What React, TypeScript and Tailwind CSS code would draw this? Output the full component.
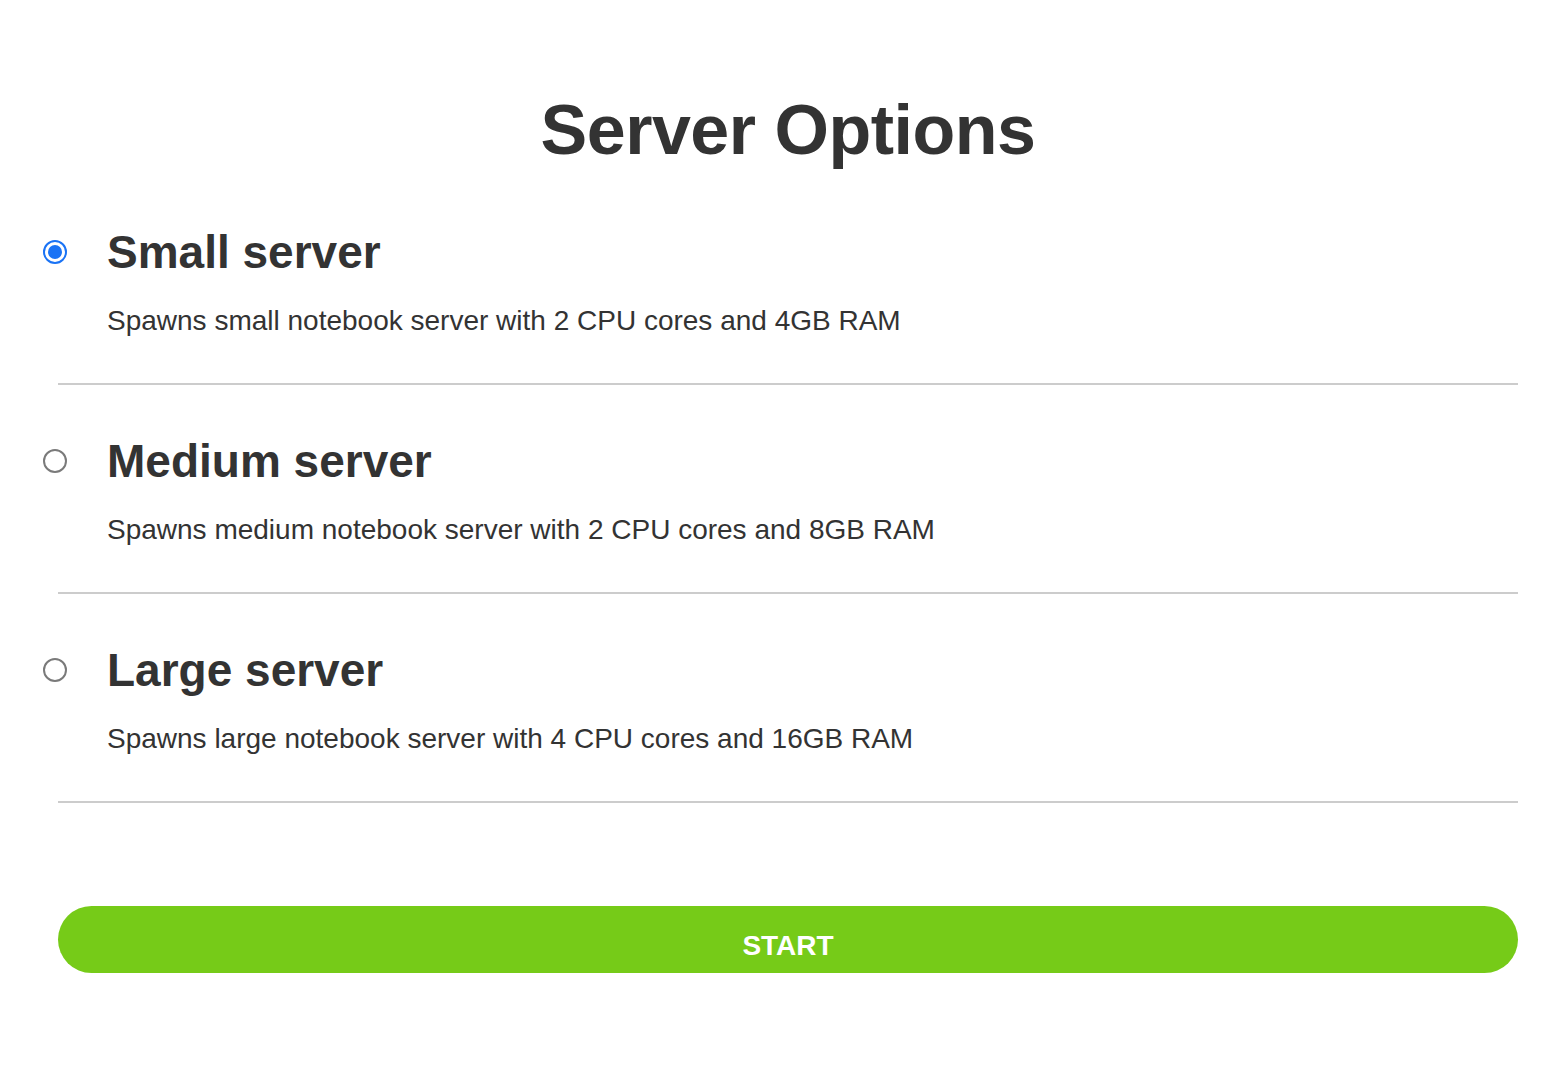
import { useState } from "react";

const servers = [
  {
    id: "small",
    name: "Small server",
    description: "Spawns small notebook server with 2 CPU cores and 4GB RAM",
  },
  {
    id: "medium",
    name: "Medium server",
    description: "Spawns medium notebook server with 2 CPU cores and 8GB RAM",
  },
  {
    id: "large",
    name: "Large server",
    description: "Spawns large notebook server with 4 CPU cores and 16GB RAM",
  },
];

function Radio({ checked }: { checked: boolean }) {
  if (checked) {
    return (
      <span className="flex h-[24px] w-[24px] items-center justify-center rounded-full border-2 border-[#1a73f5] bg-white">
        <span className="h-[14px] w-[14px] rounded-full bg-[#1a73f5]" />
      </span>
    );
  }

  return <span className="block h-[24px] w-[24px] rounded-full border-2 border-[#7a7a7a] bg-white" />;
}

export default function App() {
  const [selected, setSelected] = useState("small");

  return (
    <div className="min-h-screen bg-white pl-[58px] pr-[32px] text-[#333333] font-['Liberation_Sans',Arial,sans-serif]">
      <h1 className="pt-[88px] text-center text-[70px] font-bold leading-[84px] tracking-[-0.5px]">
        Server Options
      </h1>

      <div className="mt-[32px]">
        {servers.map((server) => (
          <label
            key={server.id}
            onClick={() => setSelected(server.id)}
            className="block cursor-pointer border-b-2 border-[#cccccc] pb-[44px] pt-[20px] not-first:pt-[48px]"
          >
            <div className="-ml-[15px] flex items-center gap-[40px]">
              <Radio checked={selected === server.id} />
              <span className="text-[46px] font-bold leading-[56px]">{server.name}</span>
            </div>
            <p className="mt-[23px] pl-[49px] text-[28px] leading-[36px]">{server.description}</p>
          </label>
        ))}
      </div>

      <button className="mt-[103px] flex h-[67px] w-full items-center justify-center rounded-full bg-[#76cb18] pt-[12px] text-[28px] font-bold text-white">
        START
      </button>
    </div>
  );
}
